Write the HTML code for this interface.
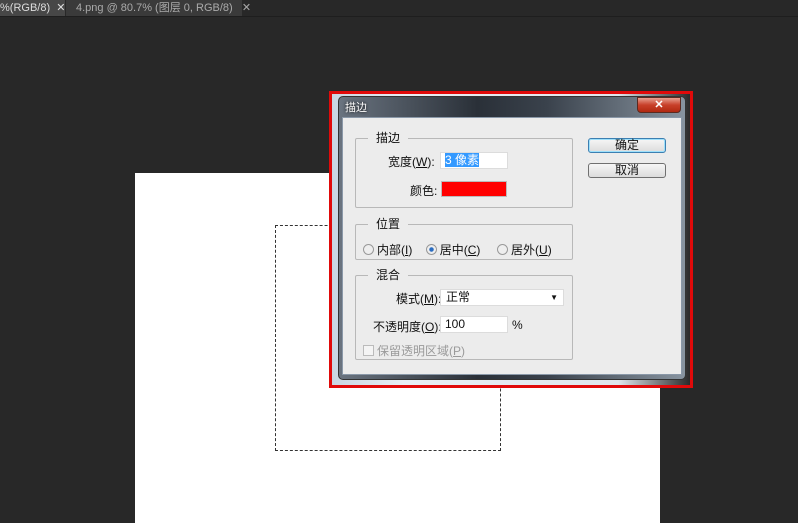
<!DOCTYPE html>
<html><head><meta charset="utf-8"><style>
*{margin:0;padding:0;box-sizing:border-box}
body{width:798px;height:523px;background:#282828;position:relative;overflow:hidden;font-family:"Liberation Sans","Noto Sans CJK SC",sans-serif;font-size:12px;color:#111}
.a{position:absolute}
.tab{top:0;height:16px;color:#aaa;font-size:11px;line-height:16px;white-space:nowrap}
.grp{border:1px solid #b8b8b8;border-radius:2px}
.lg{background:#ececec;padding:0 8px;top:-9px;left:12px;line-height:16px}
.btn{border:1px solid #707070;border-radius:3px;background:linear-gradient(#f6f6f6,#dcdcdc);text-align:center;line-height:13px;font-size:12px}
.in{background:#fff;border:1px solid #dcdcdc;line-height:15px;padding-left:4px}
.rad{display:inline-block;width:11px;height:11px;border-radius:50%;border:1px solid #999;background:#eee;vertical-align:-1px;margin-right:3px}
</style></head><body>
<div class="a tab" style="left:0;width:65px;background:#474747;color:#ddd;padding-left:0">%(RGB/8)&nbsp;&nbsp;✕</div>
<div class="a tab" style="left:66px;width:176px;background:#3a3a3a;padding-left:10px">4.png @ 80.7% (图层 0, RGB/8)&nbsp;&nbsp;&nbsp;✕</div>
<div class="a" style="left:0;top:16px;width:798px;height:1px;background:#1e1e1e"></div>
<div class="a" style="left:135px;top:173px;width:525px;height:350px;background:#fff"></div>
<div class="a" style="left:275px;top:225px;width:226px;height:226px;border:1px dashed #333"></div>
<!-- dialog -->
<div class="a" style="left:329px;top:91px;width:364px;height:297px;border:3px solid #e00a0a"></div>
<div class="a" style="left:332px;top:94px;width:358px;height:291px;background:linear-gradient(90deg,#c9d6e2,#e8eef4 20%,#dfe6ec 80%,#2a2a2a)"></div>
<div class="a" style="left:338px;top:96px;width:348px;height:284px;border-radius:5px;background:linear-gradient(90deg,#6a7480,#2a3038 40%,#3a424c 60%,#8894a0);border:1px solid #333"></div>
<div class="a" style="left:345px;top:99px;color:#fff;font-size:11px;text-shadow:0 0 3px #000">描边</div>
<div class="a" style="left:637px;top:97px;width:44px;height:16px;border-radius:0 0 4px 4px;background:linear-gradient(#e8a090,#c8402a 50%,#b02810);border:1px solid #5a2a20;color:#fff;text-align:center;font-size:11px;line-height:14px;font-weight:bold">✕</div>
<div class="a" style="left:342px;top:117px;width:340px;height:258px;background:#ececec;border:1px solid #8a98a8"></div>
<div class="a grp" style="left:355px;top:138px;width:218px;height:70px"><div class="a lg">描边</div></div>
<div class="a" style="left:388px;top:153px">宽度(<u>W</u>):</div>
<div class="a in" style="left:440px;top:152px;width:68px;height:17px"><span style="background:#3399ff;color:#fff">3 像素</span></div>
<div class="a" style="left:410px;top:182px">颜色:</div>
<div class="a" style="left:441px;top:181px;width:66px;height:16px;background:#ff0000;border:1px solid #bbb"></div>
<div class="a grp" style="left:355px;top:224px;width:218px;height:36px"><div class="a lg">位置</div></div>
<div class="a" style="left:363px;top:241px;white-space:nowrap"><span class="rad"></span>内部(<u>I</u>)&nbsp;&nbsp;&nbsp;&nbsp;<span class="rad" style="background:radial-gradient(#2a6cc0 30%,#eee 40%)"></span>居中(<u>C</u>)&nbsp;&nbsp;&nbsp;&nbsp;&nbsp;<span class="rad"></span>居外(<u>U</u>)</div>
<div class="a grp" style="left:355px;top:275px;width:218px;height:85px"><div class="a lg">混合</div></div>
<div class="a" style="left:396px;top:290px">模式(<u>M</u>):</div>
<div class="a in" style="left:440px;top:289px;width:124px;height:17px;padding-left:5px">正常<span style="position:absolute;right:5px;top:0;font-size:8px">▼</span></div>
<div class="a" style="left:373px;top:318px">不透明度(<u>O</u>):</div>
<div class="a in" style="left:440px;top:316px;width:68px;height:17px">100</div>
<div class="a" style="left:512px;top:318px">%</div>
<div class="a" style="left:363px;top:342px;color:#9a9a9a"><span style="display:inline-block;width:11px;height:11px;border:1px solid #bbb;background:#f4f4f4;vertical-align:-1px;margin-right:3px"></span>保留透明区域(<u>P</u>)</div>
<div class="a btn" style="left:588px;top:138px;width:78px;height:15px;border-color:#3c7fb1;box-shadow:inset 0 0 0 1px #9ee0fb">确定</div>
<div class="a btn" style="left:588px;top:163px;width:78px;height:15px">取消</div>
</body></html>
